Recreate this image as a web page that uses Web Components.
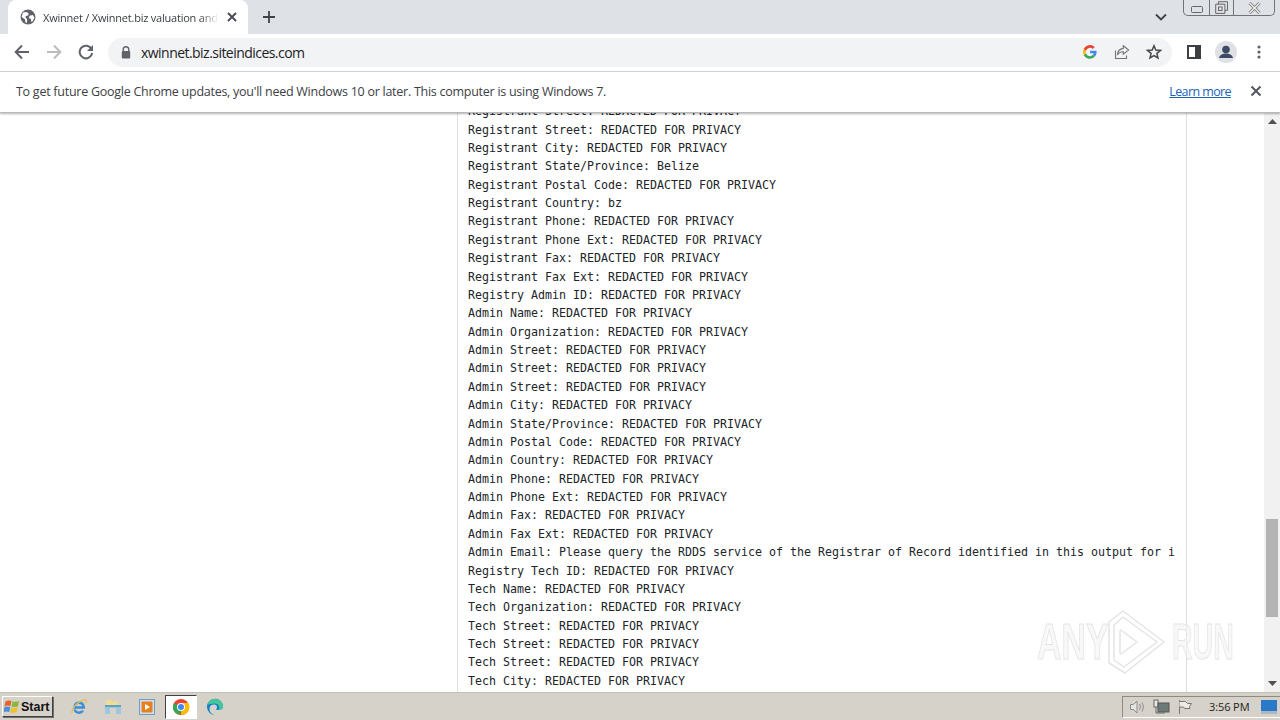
<!DOCTYPE html>
<html lang="en"><head><meta charset="utf-8"><title>Xwinnet</title>
<style>
html,body{margin:0;height:720px;overflow:hidden;background:#fff}
body{display:flex;flex-direction:column;font-family:"Open Sans","Noto Sans",sans-serif}
</style></head><body>
<chrome-tabs></chrome-tabs>
<chrome-bar></chrome-bar>
<chrome-info></chrome-info>
<page-view>
<whois-line clip>Registrant Street: REDACTED FOR PRIVACY</whois-line>
<whois-line>Registrant Street: REDACTED FOR PRIVACY</whois-line>
<whois-line>Registrant City: REDACTED FOR PRIVACY</whois-line>
<whois-line>Registrant State/Province: Belize</whois-line>
<whois-line>Registrant Postal Code: REDACTED FOR PRIVACY</whois-line>
<whois-line>Registrant Country: bz</whois-line>
<whois-line>Registrant Phone: REDACTED FOR PRIVACY</whois-line>
<whois-line>Registrant Phone Ext: REDACTED FOR PRIVACY</whois-line>
<whois-line>Registrant Fax: REDACTED FOR PRIVACY</whois-line>
<whois-line>Registrant Fax Ext: REDACTED FOR PRIVACY</whois-line>
<whois-line>Registry Admin ID: REDACTED FOR PRIVACY</whois-line>
<whois-line>Admin Name: REDACTED FOR PRIVACY</whois-line>
<whois-line>Admin Organization: REDACTED FOR PRIVACY</whois-line>
<whois-line>Admin Street: REDACTED FOR PRIVACY</whois-line>
<whois-line>Admin Street: REDACTED FOR PRIVACY</whois-line>
<whois-line>Admin Street: REDACTED FOR PRIVACY</whois-line>
<whois-line>Admin City: REDACTED FOR PRIVACY</whois-line>
<whois-line>Admin State/Province: REDACTED FOR PRIVACY</whois-line>
<whois-line>Admin Postal Code: REDACTED FOR PRIVACY</whois-line>
<whois-line>Admin Country: REDACTED FOR PRIVACY</whois-line>
<whois-line>Admin Phone: REDACTED FOR PRIVACY</whois-line>
<whois-line>Admin Phone Ext: REDACTED FOR PRIVACY</whois-line>
<whois-line>Admin Fax: REDACTED FOR PRIVACY</whois-line>
<whois-line>Admin Fax Ext: REDACTED FOR PRIVACY</whois-line>
<whois-line>Admin Email: Please query the RDDS service of the Registrar of Record identified in this output for i</whois-line>
<whois-line>Registry Tech ID: REDACTED FOR PRIVACY</whois-line>
<whois-line>Tech Name: REDACTED FOR PRIVACY</whois-line>
<whois-line>Tech Organization: REDACTED FOR PRIVACY</whois-line>
<whois-line>Tech Street: REDACTED FOR PRIVACY</whois-line>
<whois-line>Tech Street: REDACTED FOR PRIVACY</whois-line>
<whois-line>Tech Street: REDACTED FOR PRIVACY</whois-line>
<whois-line>Tech City: REDACTED FOR PRIVACY</whois-line>
</page-view>
<win-taskbar></win-taskbar>
<script>
function def(name,html){customElements.define(name,class extends HTMLElement{constructor(){super();this.attachShadow({mode:"open"}).innerHTML=html}})}

def("chrome-tabs",`<style>
:host{display:flex;flex:none;height:34px;background:#dee1e6;align-items:stretch;position:relative}
.tab{width:240px;margin-left:8px;background:#fff;border-radius:8px 8px 0 0;display:flex;align-items:center;padding:0 11px 0 12px;box-sizing:border-box;gap:7px;height:34px}
.tab svg.g{flex:none}
.t{flex:1;min-width:0;font:11px "Open Sans",sans-serif;color:#3c4043;white-space:nowrap;overflow:hidden;letter-spacing:-.22px;-webkit-mask-image:linear-gradient(90deg,#000 88%,transparent 98%)}
.plus{margin-left:14px;align-self:center;flex:none}
.sp{flex:1}
.chev{align-self:center;margin-right:113px}
.win{position:absolute;right:5px;top:0;width:92px;height:16px;border:1px solid #6f7378;border-top:0;border-radius:0 0 5px 5px;box-sizing:border-box;display:grid;grid-template-columns:26px 24px 1fr;background:#dfe2e6}
.win div{display:flex;align-items:center;justify-content:center;border-right:1px solid #6f7378}
.win div:last-child{border:0}
</style>
<div class="tab">
<svg class="g" width="16" height="16" viewBox="0 0 16 16"><circle cx="8" cy="8" r="7.5" fill="#5f6368"/><path d="M3 3.6 6.5 3l2.2 1.4-.6 2-2.3.5-.3 1.6 1.7 1.8-.4 3.6-1.3-.4-.6-3.3L1.600 8zM9.500 6.800l3.300-.8 1.600 2.500-1.500 3.500-1.500 1-.5-3-2-1z" fill="#fff"/></svg>
<span class="t">Xwinnet / Xwinnet.biz valuation and</span>
<svg width="10" height="10" viewBox="0 0 10 10" style="flex:none;margin-left:-2px"><path d="M1 1l8 8M9 1 1 9" stroke="#45494e" stroke-width="1.800"/></svg>
</div>
<svg class="plus" width="14" height="14" viewBox="0 0 14 14"><path d="M7 1v12M1 7h12" stroke="#3f4347" stroke-width="1.800"/></svg>
<div class="sp"></div>
<svg class="chev" width="12" height="8" viewBox="0 0 12 8"><path d="M1 1.500l5 5 5-5" fill="none" stroke="#3c4043" stroke-width="1.800"/></svg>
<div class="win">
<div><svg width="12" height="7" viewBox="0 0 12 7" style="margin-top:4px"><rect x=".5" y=".5" width="11" height="6" rx="1" fill="none" stroke="#666"/></svg></div>
<div><svg width="13" height="13" viewBox="0 0 13 13"><path d="M3.500 3V.7h9v8.600H10M.7 3.200h9.200v9.200H.7z" fill="none" stroke="#666"/><rect x="3.500" y="6" width="3.500" height="3.500" fill="none" stroke="#666"/></svg></div>
<div><svg width="13" height="12" viewBox="0 0 13 12"><path d="M1.500 1l10 10M11.500 1l-10 10" stroke="#777" stroke-width="3"/><path d="M1.500 1l10 10M11.500 1l-10 10" stroke="#eef0f2" stroke-width="1.400"/></svg></div>
</div>`);

def("tool-btn",`<style>:host{display:flex;width:32px;height:32px;align-items:center;justify-content:center;flex:none}</style><slot></slot>`);

def("chrome-bar",`<style>
:host{display:flex;flex:none;align-items:center;height:38px;background:#fff;border-bottom:1px solid #d3d5d8;padding:0 5px 1px 6px;box-sizing:border-box}
.box{flex:1;height:29px;margin:0 6px;background:#f1f3f4;border-radius:15px;display:flex;align-items:center;padding-left:13px;padding-right:2px}
.u{flex:1;font:14px "Open Sans",sans-serif;letter-spacing:-.54px;color:#202124;margin-left:10px;white-space:nowrap}
.r,.l{display:flex}
</style>
<div class="l">
<tool-btn><svg width="16" height="16" viewBox="0 0 16 16"><path d="M15 8H2M8 1.500 1.700 8 8 14.500" fill="none" stroke="#5f6368" stroke-width="2"/></svg></tool-btn>
<tool-btn><svg width="16" height="16" viewBox="0 0 16 16"><path d="M1 8h13M8 1.500 14.300 8 8 14.500" fill="none" stroke="#babcbe" stroke-width="2"/></svg></tool-btn>
<tool-btn><svg width="16" height="16" viewBox="0 0 16 16"><path d="M13.600 5.200A6.300 6.300 0 1 0 14.200 9" fill="none" stroke="#5f6368" stroke-width="2"/><path d="M15 1v6H9z" fill="#5f6368"/></svg></tool-btn>
</div>
<div class="box">
<svg width="10" height="13" viewBox="0 0 10 13"><path d="M2.200 5V3.600a2.800 2.800 0 0 1 5.600 0V5" fill="none" stroke="#5f6368" stroke-width="1.400"/><rect x=".8" y="5" width="8.400" height="7.500" rx="1" fill="#5f6368"/></svg>
<span class="u">xwinnet.biz.siteindices.com</span>
<tool-btn><svg width="14" height="14" viewBox="0 0 14 14"><path d="M7.100 5.700h6.400c.1.4.1.8.1 1.300 0 1.800-.6 3.400-1.700 4.500L9.800 9.800c.5-.4.9-.9 1-1.500H7.100z" fill="#4285f4"/><path d="M3 8.300A4.300 4.300 0 0 0 7.100 11.200c1.100 0 2-.5 2.700-1.400l2.100 1.700A6.900 6.900 0 0 1 .7 10z" fill="#34a853"/><path d="M.7 4a6.900 6.900 0 0 0 0 6L3 8.300a4.300 4.300 0 0 1 0-2.600z" fill="#fbbc05"/><path d="M.7 4A6.900 6.900 0 0 1 11.700 2L9.800 3.900A4.300 4.300 0 0 0 3 5.700z" fill="#ea4335"/></svg></tool-btn>
<tool-btn><svg width="16" height="16" viewBox="0 0 16 16"><path d="M9.300 1.800 14.600 6l-5.300 4.200V7.700C6 7.700 4.400 8.900 3.400 11c.2-3.600 2.400-6 5.900-6.600zM1.500 6.500v8h11v-3" fill="none" stroke="#6f7377" stroke-width="1.100"/></svg></tool-btn>
<tool-btn><svg width="16" height="16" viewBox="0 0 16 16"><path d="M8 1.700 9.800 6l4.700.4-3.600 3 1.100 4.600L8 11.600 4 14l1.100-4.600-3.600-3L6.200 6z" fill="none" stroke="#45494e" stroke-width="1.500"/></svg></tool-btn>
</div>
<div class="r">
<tool-btn><svg width="14" height="14" viewBox="0 0 14 14"><rect x="1" y="1" width="12" height="12" fill="none" stroke="#3c4043" stroke-width="2"/><rect x="8" y="1" width="5" height="12" fill="#3c4043"/></svg></tool-btn>
<tool-btn><svg width="24" height="24" viewBox="0 0 24 24"><circle cx="12" cy="12" r="11" fill="#dfe1e5"/><circle cx="12" cy="9.500" r="3.800" fill="#3c4a63"/><path d="M5 18c1-3.500 4-4.500 7-4.500s6 1 7 4.500z" fill="#3c4a63"/></svg></tool-btn>
<tool-btn style="margin-left:1px"><svg width="4" height="14" viewBox="0 0 4 14"><circle cx="2" cy="2" r="1.600" fill="#5f6368"/><circle cx="2" cy="7" r="1.600" fill="#5f6368"/><circle cx="2" cy="12" r="1.600" fill="#5f6368"/></svg></tool-btn>
</div>`);

def("chrome-info",`<style>
:host{display:flex;flex:none;align-items:center;height:41px;background:#fff;padding:0 18px 2px 16px;box-sizing:border-box;border-bottom:1px solid #b9b9b9;box-shadow:0 1px 2px rgba(0,0,0,.3);position:relative;z-index:2;font:12.5px "Open Sans",sans-serif;color:#3c4043}
span{flex:1;white-space:nowrap;letter-spacing:-.26px}
a{color:#1a63b8;text-decoration:underline;margin-right:19px;letter-spacing:-.6px}
svg{flex:none}
</style><span>To get future Google Chrome updates, you'll need Windows 10 or later. This computer is using Windows 7.</span><a>Learn more</a>
<svg width="12" height="12" viewBox="0 0 12 12"><path d="M1.500 1.500l9 9M10.500 1.500l-9 9" stroke="#53565a" stroke-width="2"/></svg>`);

def("whois-line",`<style>:host{display:block;height:18.375px;line-height:18.375px;white-space:pre;overflow:hidden}:host([clip]){margin-top:-10.825px}</style><slot></slot>`);

def("page-view",`<style>
:host{flex:1;min-height:0;display:flex;background:#fff;overflow:hidden;position:relative}
.main{flex:1;min-width:0;padding-left:457px;display:flex}
.pre{width:730px;box-sizing:border-box;border:solid #dfdfdf;border-width:0 1px;padding:0 11px 0 10px;overflow:hidden;font:11.630px "DejaVu Sans Mono",monospace;color:#212529}
.clip{overflow:hidden;height:100%}
.sb{width:16px;background:#f1f1f1;flex:none;display:flex;flex-direction:column;align-items:center;justify-content:space-between;position:relative}
.arrow{height:17px;display:flex;align-items:center;justify-content:center}
.thumb{position:absolute;left:2px;right:2px;top:406px;height:98px;background:#b4b4b4}
.wm{position:absolute;left:1037px;top:496px;display:flex;align-items:center;pointer-events:none}
.wm span{font:700 50px "Liberation Sans",sans-serif;color:rgba(244,244,244,.6);-webkit-text-stroke:1px #e4e4e4;display:inline-block;transform:scaleX(.68);transform-origin:left;width:70px;white-space:nowrap}
.wm svg{flex:none;margin-right:7px}
.wm span.b{width:62px;transform:scaleX(.57)}
</style>
<div class="main"><div class="pre"><div class="clip"><slot></slot></div></div></div>
<div class="sb"><div class="arrow"><svg width="9" height="5" viewBox="0 0 9 5" ><path d="M4.500 0 9 5H0z" fill="#505050"/></svg></div><div class="arrow"><svg width="9" height="5" viewBox="0 0 9 5"><path d="M0 0h9L4.500 5z" fill="#505050"/></svg></div><div class="thumb"></div></div>
<div class="wm"><span>ANY</span><svg width="58" height="66" viewBox="0 0 58 66" fill="none" stroke="#e4e4e4" stroke-width="1.500" stroke-linejoin="round"><path d="M2 13 16 2 57 33 18 64 2 54z"/><path d="M7 16V51l10 7L50 33 16 8z"/><path d="M13 22V44l1 1L30 33 14 21z"/></svg><span class="b">RUN</span></div>`);

def("win-taskbar",`<style>
:host{display:flex;flex:none;height:28px;background:#d6d2ca;border-top:1px solid #c4c1b9;box-sizing:border-box;align-items:center;position:relative;z-index:3}
.start{margin-left:2px;width:51px;height:21px;background:#d6d2ca;border:1px solid;border-color:#fff #404040 #404040 #fff;box-sizing:border-box;display:flex;align-items:center;gap:1px;padding-left:1px;font:700 12.5px "Liberation Sans",sans-serif;color:#111;box-shadow:1px 1px 0 #707070}
.apps{display:flex;margin-left:9px;align-items:center}
.ic{width:34px;height:24px;display:flex;align-items:center;justify-content:center}
.on{background:#fff;border:1px solid;border-color:#404040 #fff #fff #404040;box-sizing:border-box;width:32px;margin:0 1px}
.sp{flex:1}
.tray{width:158px;height:22px;border:1px solid;border-color:#8d8a84 #fff #fff #8d8a84;box-sizing:border-box;display:flex;align-items:center;padding-left:6px;border-right:0}
.time{font:11px "Open Sans",sans-serif;color:#222;margin-left:16px;letter-spacing:-.1px}
</style>
<div class="start"><svg width="16" height="15" viewBox="0 0 16 15"><path d="M1.500 2.500C3.500 1.200 5.500 1.200 7.500 2L6.500 7C4.500 6.200 2.500 6.200.5 7.500z" fill="#e8632b"/><path d="M8.500 2.200c2 .8 4 .8 6.500-.2l-1 5.200c-2.500 1-4.500 1-6.500.2z" fill="#8bb83c"/><path d="M.3 8.500c2-1.300 4-1.300 6-.5l-1 5c-2-.8-4-.8-6 .5z" fill="#4a8fd8"/><path d="M7.300 8.300c2 .8 4 .8 6.500-.2l-1 5c-2.500 1-4.500 1-6.500.2z" fill="#f0c030"/></svg>Start</div>
<div class="apps">
<div class="ic"><svg width="18" height="18" viewBox="0 0 18 18"><path d="M15 9.500H4.500C4.700 6.500 6.500 4.800 9 4.800s4.300 1.700 4.500 4M4.600 11.500c.6 2 2.200 3.200 4.400 3.200 1.800 0 3.200-.8 4-2" fill="none" stroke="#3b8fd6" stroke-width="2.400"/><path d="M2 15.500C1 12 6 4 14 1.800c2-.5 3.200 1.200 2 3.500" fill="none" stroke="#e7c04a" stroke-width="1.200"/></svg></div>
<div class="ic"><svg width="18" height="17" viewBox="0 0 18 17"><path d="M2 2h5l1 1.500h6V7H2z" fill="#f1dc90"/><path d="M1 7h16v9H1z" fill="#9cc7dc"/><path d="M6 10h6v6H6z" fill="#d6d2ca"/><path d="M1 7h16v2H1z" fill="#5ea3c7"/></svg></div>
<div class="ic"><svg width="16" height="16" viewBox="0 0 16 16"><rect x=".5" y=".5" width="15" height="15" fill="#cfe0ef" stroke="#6f9cc9"/><rect x="2.500" y="2.500" width="11" height="11" rx="1" fill="#e8801f"/><path d="M6 5v6l5-3z" fill="#fff"/></svg></div>
<div class="ic on"><svg width="18" height="18" viewBox="0 0 18 18"><circle cx="9" cy="9" r="8" fill="#ea4335"/><path d="M9 5h7.300A8 8 0 0 1 9 17z" fill="#fbbc05"/><path d="M7 16.800 10.500 11l-3-3.500-5.700-2A8 8 0 0 0 7 16.800z" fill="#34a853"/><circle cx="9" cy="9" r="4" fill="#fff"/><circle cx="9" cy="9" r="3" fill="#4285f4"/></svg></div>
<div class="ic"><svg width="18" height="18" viewBox="0 0 18 18"><path d="M1 9a8 8 0 0 1 16-.500c0 2.500-2 3.500-4.500 3.500-1.500 0-2.500-.5-2.500-1 2-1 1.200-4.500-2-4.500C5 6.500 3.500 8 3.500 11c0 3.500 3 6 6.500 6a8 8 0 0 1-9-8z" fill="#0f7fc8"/><path d="M1.500 7C2.500 3 5.500 1 9 1c4.500 0 8 3.500 8 7.500 0 2.500-2 3.500-4.500 3.500 2-3 0-6.500-4-6.500-3 0-5.500 1-7 1.500z" fill="#43c79b"/></svg></div>
</div>
<div class="sp"></div>
<div class="tray">
<svg width="17" height="16" viewBox="0 0 17 16" fill="none" stroke="#8c8c8c"><path d="M1.500 5.500h3L8 2v12L4.500 10.500h-3z" fill="#e4e4e0"/><path d="M10.500 5c1 1.800 1 4.200 0 6M13 3.500c1.700 2.800 1.700 6.200 0 9"/></svg>
<svg width="17" height="16" viewBox="0 0 17 16" style="margin-left:7px"><rect x="1" y="1" width="4" height="7" fill="#e8e8e4" stroke="#666"/><rect x="5" y="4" width="11" height="9" fill="#6d7a78" stroke="#555"/><path d="M3 8v6h9" fill="none" stroke="#666"/></svg>
<svg width="16" height="16" viewBox="0 0 16 16" style="margin-left:7px" fill="none" stroke="#777"><path d="M2.500 1v14"/><path d="M2.500 2.500h6l2 2h4l-2 3 .5 2h-5l-2-1.500h-3.500" fill="#ecebe6"/></svg>
<span class="time">3:56 PM</span>
<svg width="16" height="14" viewBox="0 0 16 14" style="margin-left:12px"><rect width="16" height="12" fill="#2a78c8"/><rect y="11" width="16" height="3" fill="#aab8c4"/></svg>
</div>`);
</script>
</body></html>
